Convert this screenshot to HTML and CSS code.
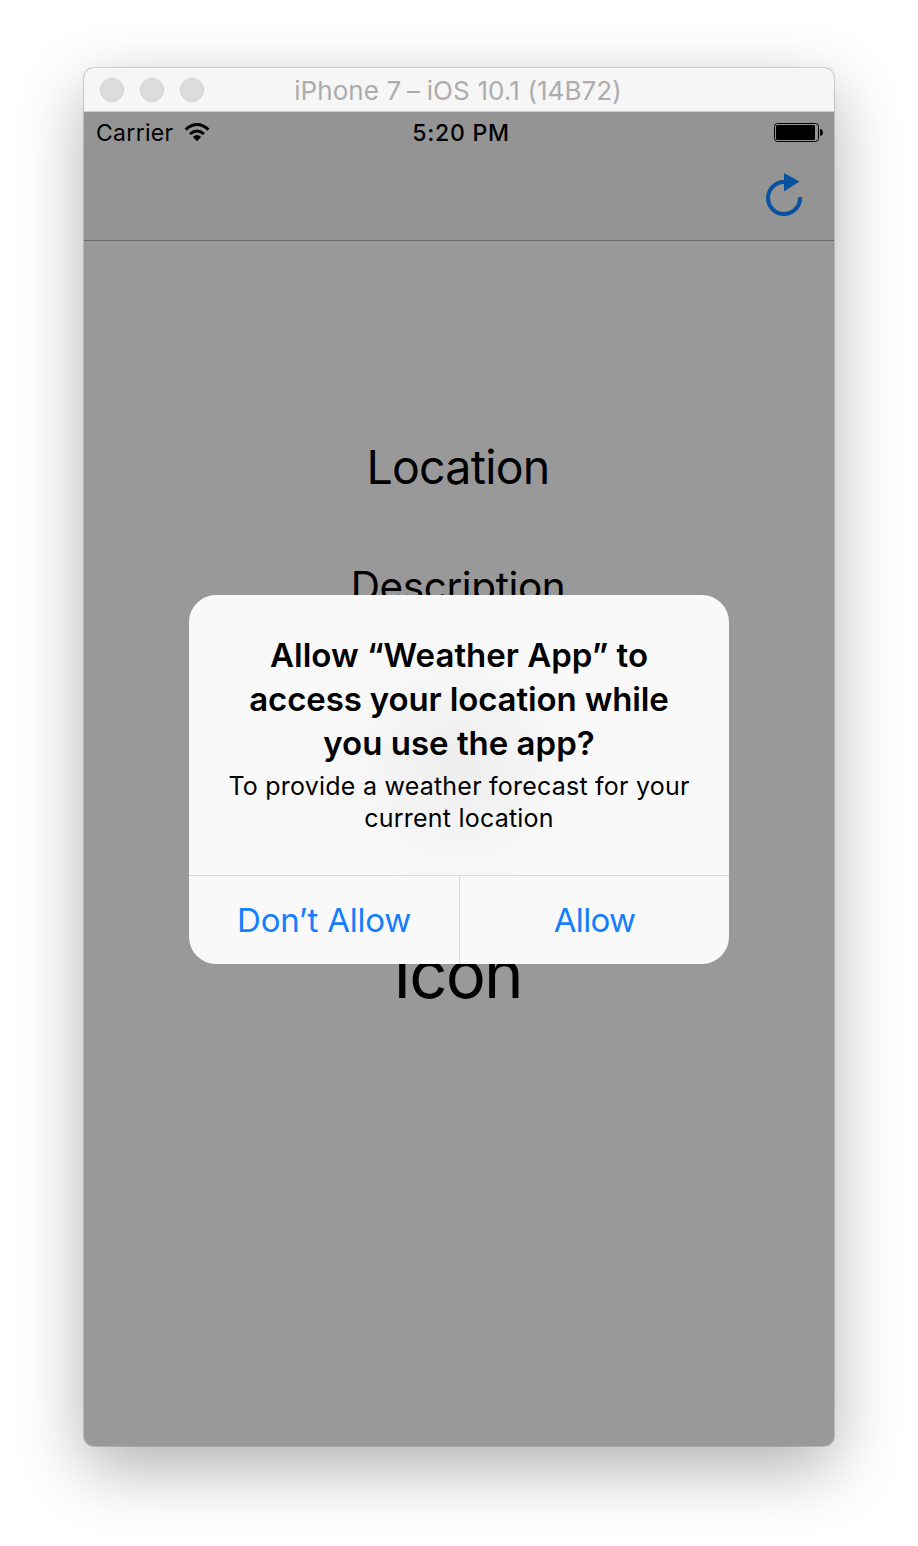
FILE: index.html
```
<!DOCTYPE html>
<html lang="en">
<head>
<meta charset="utf-8">
<title>Weather App</title>
<link rel="stylesheet" href="styles.css">
</head>
<body>
<div class="window">
  <header class="titlebar">
    <div class="lights"><i class="light"></i><i class="light"></i><i class="light"></i></div>
    <div class="window-title">iPhone 7 <span class="dash">–</span> iOS 10.1 (14B72)</div>
  </header>
  <main class="screen">
    <div class="navigation">
      <div class="status">
        <div class="carrier">
          <span class="carrier-name">Carrier</span>
          <svg class="wifi" width="26" height="19" viewBox="0 0 26 19">
            <path d="M1.6 6.6Q13 -3.6 24.4 6.6" fill="none" stroke="#000" stroke-width="3"/>
            <path d="M6 11Q13 5 20 11" fill="none" stroke="#000" stroke-width="2.7"/>
            <path d="M8.8 14Q13 10.2 17.2 14L13 18.2Z"/>
          </svg>
        </div>
        <span class="time">5:20 PM</span>
        <div class="power">
          <svg width="49" height="19" viewBox="0 0 49 19">
            <rect x=".5" y=".5" width="44" height="18" rx="3" fill="none" stroke="#000"/>
            <rect x="2" y="2" width="39" height="15" rx="1.5"/>
            <path d="M46 6Q49 6.5 49 9.5T46 13Z"/>
          </svg>
        </div>
      </div>
      <div class="toolbar">
        <svg class="refresh" width="38" height="44" viewBox="0 0 38 44">
          <path d="M19 9A16 16 0 1 0 35 24" fill="none" stroke="#0751a1" stroke-width="4"/>
          <path d="M19 0L34.5 8.5L19 18.5Z" fill="#0751a1"/>
        </svg>
      </div>
    </div>
    <div class="content">
      <div class="label location">Location</div>
      <div class="label description">Description</div>
      <div class="label icon">Icon</div>
    </div>
    <section class="alert">
      <div class="message">
        <h1>Allow “Weather App” to<br><span class="middle">access your location while</span><br>you use the app?</h1>
        <p>To provide a weather forecast for your<br>current location</p>
      </div>
      <div class="actions">
        <button class="deny">Don’t Allow</button>
        <button class="allow">Allow</button>
      </div>
    </section>
  </main>
</div>
</body>
</html>
```
FILE: styles.css
```
* { box-sizing: border-box; }
body {
  margin: 0;
  height: 1546px;
  padding: 68px 84px 100px;
  overflow: hidden;
  background: #fff;
  color: #000;
  font-family: Inter, sans-serif;
}
.window {
  height: 1378px;
  border-radius: 10px;
  background: #999;
  box-shadow: 0 0 0 1px rgba(0,0,0,.16), 0 22px 66px rgba(0,0,0,.31);
}
.titlebar {
  display: grid;
  grid-template-columns: 120px 1fr 120px;
  align-items: center;
  height: 44px;
  background: #f6f6f6;
  border-top: 1px solid #fff;
  border-bottom: 1px solid #cfcfcf;
  border-radius: 10px 10px 0 0;
}
.lights { display: flex; gap: 16px; padding-left: 16px; }
.light {
  width: 24px;
  height: 24px;
  border: 1px solid #cecece;
  border-radius: 50%;
  background: #dcdcdc;
}
.window-title {
  padding-top: 1px;
  padding-right: 2px;
  text-align: center;
  font-size: 26px;
  letter-spacing: .05px;
  color: #acacac;
  white-space: nowrap;
}
.dash { margin: 0 -1px 0 -2px; }
.window-title { word-spacing: .3px; }
.screen { position: relative; height: 1334px; }
.navigation { height: 129px; background: #949494; border-bottom: 1px solid #696969; }
.status {
  display: grid;
  grid-template-columns: 1fr auto 1fr;
  align-items: center;
  height: 42px;
  padding: 0 11px 0 12px;
}
.carrier { display: flex; align-items: center; gap: 10px; font-size: 23px; letter-spacing: .3px; }
.wifi { margin-bottom: 2px; }
.time { padding-left: 3px; font-size: 23px; font-weight: 550; letter-spacing: .75px; }
.power { display: flex; justify-content: flex-end; padding-bottom: 2px; }
.toolbar { display: flex; justify-content: flex-end; padding: 19px 31px 0; }
.toolbar svg, .power svg, .wifi { display: block; }
.content { display: flex; flex-direction: column; text-align: center; }
.label { display: block; }
.location { margin-top: 197px; height: 58px; padding-right: 2px; line-height: 58px; font-size: 46.5px; letter-spacing: -.75px; }
.description { margin-top: 65px; height: 52px; padding-right: 2px; line-height: 52px; font-size: 40.5px; letter-spacing: -.4px; }
.icon { margin-top: 316px; height: 90px; padding-right: 3px; line-height: 90px; font-size: 67px; letter-spacing: -1.9px; }
.alert {
  position: absolute;
  left: 105px;
  top: 483px;
  width: 540px;
  height: 369px;
  overflow: hidden;
  border-radius: 27px;
  background: radial-gradient(circle at 50% 46%, #ededed 0, #f3f3f3 55px, #f9f9f9 130px);
}
.message { height: 280px; padding-top: 38px; text-align: center; white-space: nowrap; }
h1 { margin: 0; font-size: 33px; line-height: 44px; font-weight: 600; }
.middle { letter-spacing: -.13px; }
p { margin: 5px 0 0; font-size: 25px; line-height: 32px; letter-spacing: .22px; }
.actions { display: grid; grid-template-columns: 271px 269px; height: 89px; border-top: 1px solid #d8d8d8; }
button {
  padding: 0 0 1px;
  border: 0;
  background: transparent;
  color: #157efb;
  font: 33px Inter, sans-serif;
  letter-spacing: -.25px;
}
.deny { border-right: 1px solid #d8d8d8; }
.allow { letter-spacing: -.7px; }
```
